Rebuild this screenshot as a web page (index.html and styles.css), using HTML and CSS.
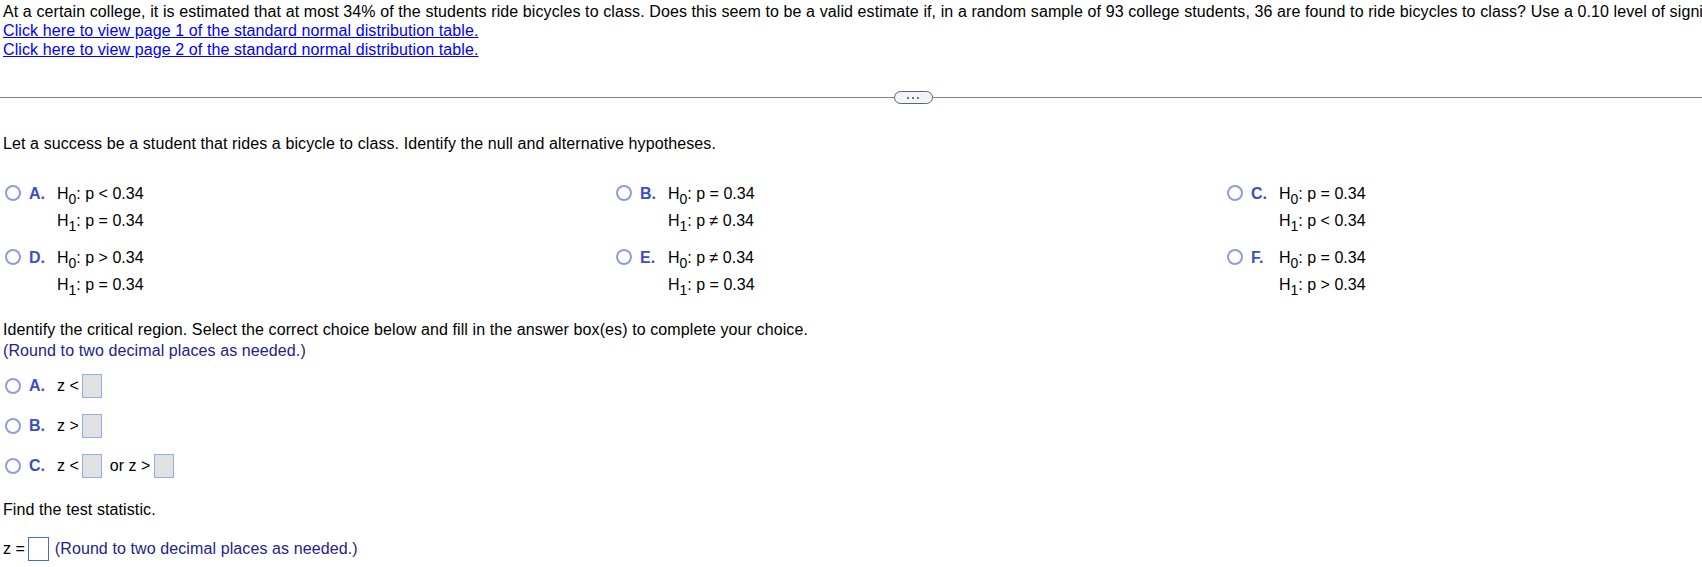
FILE: index.html
```html
<!DOCTYPE html>
<html>
<head>
<meta charset="utf-8">
<link rel="stylesheet" href="styles.css">
</head>
<body>
<div class="page">
  <div class="stem">
    <div class="line">At a certain college, it is estimated that at most 34% of the students ride bicycles to class. Does this seem to be a valid estimate if, in a random sample of 93 college students, 36 are found to ride bicycles to class? Use a 0.10 level of significance.</div>
    <div class="line"><a class="link" href="#">Click here to view page 1 of the standard normal distribution table.</a></div>
    <div class="line"><a class="link" href="#">Click here to view page 2 of the standard normal distribution table.</a></div>
  </div>

  <div class="divider">
    <div class="rule"></div>
    <div class="pill"><span class="dot"></span><span class="dot"></span><span class="dot"></span></div>
    <div class="rule"></div>
  </div>

  <div class="intro">Let a success be a student that rides a bicycle to class. Identify the null and alternative hypotheses.</div>

  <div class="hyp-grid">
    <div class="opt">
      <span class="radio"></span><span class="letter">A.</span>
      <div class="hyp">
        <div class="hline">H<sub class="sub">0</sub>: p &lt; 0.34</div>
        <div class="hline">H<sub class="sub">1</sub>: p = 0.34</div>
      </div>
    </div>
    <div class="opt">
      <span class="radio"></span><span class="letter">B.</span>
      <div class="hyp">
        <div class="hline">H<sub class="sub">0</sub>: p = 0.34</div>
        <div class="hline">H<sub class="sub">1</sub>: p ≠ 0.34</div>
      </div>
    </div>
    <div class="opt">
      <span class="radio"></span><span class="letter">C.</span>
      <div class="hyp">
        <div class="hline">H<sub class="sub">0</sub>: p = 0.34</div>
        <div class="hline">H<sub class="sub">1</sub>: p &lt; 0.34</div>
      </div>
    </div>
    <div class="opt">
      <span class="radio"></span><span class="letter">D.</span>
      <div class="hyp">
        <div class="hline">H<sub class="sub">0</sub>: p &gt; 0.34</div>
        <div class="hline">H<sub class="sub">1</sub>: p = 0.34</div>
      </div>
    </div>
    <div class="opt">
      <span class="radio"></span><span class="letter">E.</span>
      <div class="hyp">
        <div class="hline">H<sub class="sub">0</sub>: p ≠ 0.34</div>
        <div class="hline">H<sub class="sub">1</sub>: p = 0.34</div>
      </div>
    </div>
    <div class="opt">
      <span class="radio"></span><span class="letter">F.</span>
      <div class="hyp">
        <div class="hline">H<sub class="sub">0</sub>: p = 0.34</div>
        <div class="hline">H<sub class="sub">1</sub>: p &gt; 0.34</div>
      </div>
    </div>
  </div>

  <div class="crit-q">
    <div class="qline">Identify the critical region. Select the correct choice below and fill in the answer box(es) to complete your choice.</div>
    <div class="qline note">(Round to two decimal places as needed.)</div>
  </div>

  <div class="crit-list">
    <div class="crow">
      <span class="radio"></span><span class="letter">A.</span>
      <span class="expr">z &lt;</span><span class="box"></span>
    </div>
    <div class="crow">
      <span class="radio"></span><span class="letter">B.</span>
      <span class="expr">z &gt;</span><span class="box"></span>
    </div>
    <div class="crow">
      <span class="radio"></span><span class="letter">C.</span>
      <span class="expr">z &lt;</span><span class="box"></span>
      <span class="expr or">or z &gt;</span><span class="box"></span>
    </div>
  </div>

  <div class="find">Find the test statistic.</div>

  <div class="zrow">
    <span class="zlabel">z =</span><span class="zbox"></span><span class="note znote">(Round to two decimal places as needed.)</span>
  </div>
</div>
</body>
</html>
```

FILE: styles.css
```css
html, body {
  margin: 0;
  padding: 0;
  background: #ffffff;
}

body {
  font-family: "Liberation Sans", Arial, sans-serif;
  font-size: 16px;
  letter-spacing: 0.1px;
  color: #000000;
}

.page {
  width: 1826px;
}

.stem {
  padding: 2px 0 0 3px;
  line-height: 19px;
}

.line {
  white-space: nowrap;
}

.link {
  color: #0000ff;
  text-decoration: underline;
}

.divider {
  margin-top: 32px;
  height: 13px;
  display: flex;
  align-items: center;
}

.rule {
  flex: 1;
  height: 1px;
  background: #7b8394;
}

.pill {
  box-sizing: border-box;
  width: 39px;
  height: 13px;
  border: 1px solid #56677d;
  border-radius: 7px;
  background: #f3f4f6;
  display: flex;
  align-items: center;
  justify-content: center;
  gap: 3px;
}

.dot {
  width: 2px;
  height: 2px;
  background: #4a4f58;
  border-radius: 1px;
}

.intro {
  margin-top: 30px;
  padding-left: 3px;
  line-height: 19px;
}

.hyp-grid {
  margin-top: 27px;
  display: grid;
  grid-template-columns: 611px 611px 611px;
  row-gap: 10px;
}

.opt {
  display: flex;
  align-items: flex-start;
}

.radio {
  box-sizing: border-box;
  flex: none;
  width: 16px;
  height: 16px;
  margin-left: 5px;
  margin-top: 5px;
  border: 2px solid #8d9edd;
  border-radius: 50%;
  background: #ffffff;
}

.letter {
  flex: none;
  width: 28px;
  margin-left: 8px;
  font-weight: bold;
  color: #3c4ec3;
  line-height: 27px;
  letter-spacing: 0;
}

.hyp {
  display: flex;
  flex-direction: column;
  letter-spacing: 0;
}

.hline {
  height: 27px;
  line-height: 27px;
  white-space: nowrap;
}

.sub {
  font-size: 14px;
  line-height: 0;
  vertical-align: -5px;
}

.crit-q {
  margin-top: 21px;
  padding-left: 3px;
}

.qline {
  line-height: 21px;
}

.note {
  color: #22228c;
}

.crit-list {
  margin-top: 11px;
  display: flex;
  flex-direction: column;
  gap: 12px;
}

.crow {
  height: 28px;
  display: flex;
  align-items: center;
}

.crow .radio {
  margin-top: 0;
}

.crow .letter {
  line-height: 28px;
}

.expr {
  white-space: nowrap;
  margin-right: 3px;
  letter-spacing: 0;
}

.expr.or {
  margin-left: 8px;
  margin-right: 4px;
}

.box {
  box-sizing: border-box;
  width: 20px;
  height: 24px;
  border: 1px solid #93aceb;
  background: #e1e1e1;
}

.find {
  margin-top: 20px;
  padding-left: 3px;
  line-height: 19px;
}

.zrow {
  margin-top: 18px;
  padding-left: 3px;
  height: 24px;
  display: flex;
  align-items: center;
}

.zlabel {
  white-space: nowrap;
  margin-right: 3px;
  letter-spacing: 0;
}

.zbox {
  box-sizing: border-box;
  width: 21px;
  height: 24px;
  border: 1px solid #3d6fd3;
  background: #ffffff;
}

.znote {
  margin-left: 6px;
  white-space: nowrap;
}
```
